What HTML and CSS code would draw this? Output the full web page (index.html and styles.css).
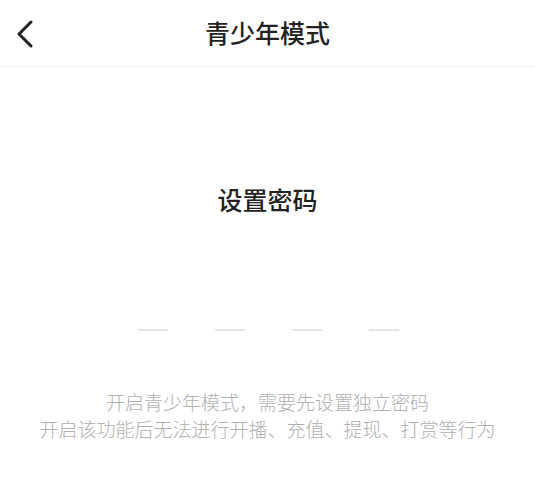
FILE: index.html
```html
<!DOCTYPE html>
<html lang="zh-CN">
<head>
<meta charset="utf-8">
<link rel="stylesheet" href="styles.css">
</head>
<body>
<header class="nav">
  <button class="back" aria-label="返回">
    <svg width="18" height="28" viewBox="0 0 18 28"><path d="M15 2 L3 14 L15 26" fill="none" stroke="#222" stroke-width="3" stroke-linecap="round" stroke-linejoin="round"/></svg>
  </button>
  <h1 class="title">青少年模式</h1>
</header>
<main class="content">
  <h2 class="heading">设置密码</h2>
  <div class="pin">
    <span class="dash"></span><span class="dash"></span><span class="dash"></span><span class="dash"></span>
  </div>
  <p class="note">开启青少年模式，需要先设置独立密码<br>开启该功能后无法进行开播、充值、提现、打赏等行为</p>
</main>
</body>
</html>
```
FILE: styles.css
```css
* { box-sizing: border-box; }
body {
  margin: 0;
  background: #fff;
  font-family: "Noto Sans CJK SC", "Noto Sans", sans-serif;
  color: #222;
}
.nav {
  position: relative;
  height: 67px;
  border-bottom: 1px solid #f0f0f0;
  display: flex;
  align-items: center;
  justify-content: center;
}
.back {
  position: absolute;
  left: 16px;
  top: 20px;
  padding: 0;
  border: 0;
  background: none;
  width: 18px;
  height: 28px;
  display: block;
}
.back svg { display: block; }
.title {
  margin: 0;
  font-size: 25px;
  font-weight: 500;
  line-height: 32px;
  margin-top: -2px;
}
.content {
  display: flex;
  flex-direction: column;
  align-items: center;
}
.heading {
  margin: 115px 0 0;
  font-size: 25px;
  font-weight: 500;
  line-height: 34px;
}
.pin {
  margin-top: 113px;
  display: flex;
  gap: 47px;
  padding-left: 2px;
}
.dash {
  width: 30px;
  height: 2px;
  background: #e5e5e5;
}
.note {
  margin: 57px 0 0;
  font-size: 19px;
  font-weight: 300;
  line-height: 27px;
  color: #b0b0b0;
  text-align: center;
}
```
